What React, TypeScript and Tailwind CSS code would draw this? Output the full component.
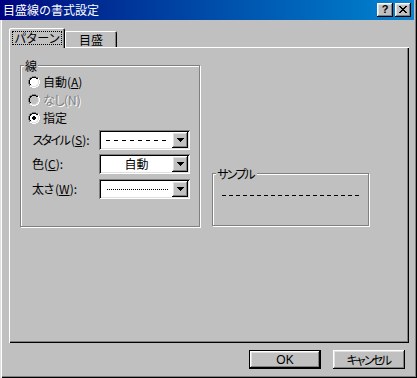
import React from "react";

const raised =
  "shadow-[inset_-1px_-1px_#000,inset_1px_1px_#fff,inset_-2px_-2px_#808080,inset_2px_2px_#dfdfdf]";
const sunken =
  "shadow-[inset_1px_1px_#808080,inset_-1px_-1px_#fff,inset_2px_2px_#000,inset_-2px_-2px_#dfdfdf]";

function Radio({ checked, disabled }: { checked?: boolean; disabled?: boolean }) {
  return (
    <svg width="12" height="12" viewBox="0 0 12 12" shapeRendering="crispEdges">
      <path d="M4 0h4v1H4zM2 1h2v1H2zM8 1h2v1H8zM1 2h1v2H1zM0 4h1v4H0zM1 8h1v2H1z" fill="#808080" />
      <path d="M4 1h4v1H4zM2 2h2v1H2zM8 2h2v1H8zM2 3h1v1H2zM1 4h1v4H1zM2 8h1v1H2z" fill="#000" />
      <path d="M10 2h1v2h-1zM11 4h1v4h-1zM10 8h1v2h-1zM8 10h2v1H8zM2 10h2v1H2zM4 11h4v1H4z" fill="#fff" />
      <path d="M9 3h1v1H9zM10 4h1v4h-1zM9 8h1v1H9zM8 9h2v1H8zM2 9h2v1H2zM4 10h4v1H4z" fill="#dfdfdf" />
      <path d="M4 2h4v1h1v1h1v4H9v1H8v1H4V9H3V8H2V4h1V3h1z" fill={disabled ? "#c0c0c0" : "#fff"} />
      {checked && <path d="M5 4h2v1h1v2H7v1H5V7H4V5h1z" fill="#000" />}
    </svg>
  );
}

function DropButton() {
  return (
    <div className={`w-[16px] h-[16px] bg-[#c0c0c0] flex items-center justify-center ${raised}`}>
      <svg width="7" height="4" viewBox="0 0 7 4" shapeRendering="crispEdges">
        <path d="M0 0h7v1H6v1H5v1H4v1H3V3H2V2H1V1H0z" fill="#000" />
      </svg>
    </div>
  );
}

function Combo({ children, start }: { children: React.ReactNode; start?: boolean }) {
  return (
    <div className={`w-[91px] h-[20px] bg-white flex items-center p-[2px] ${sunken}`}>
      <div className={`flex-1 h-full flex items-center ${start ? "justify-start" : "justify-center"}`}>{children}</div>
      <DropButton />
    </div>
  );
}

export default function App() {
  return (
    <div className="w-[417px] h-[378px] bg-[#c0c0c0] overflow-hidden flex flex-col text-[12px] leading-[14px] text-black font-['Noto_Sans_CJK_JP','Liberation_Sans',sans-serif] shadow-[inset_1px_0_#dfdfdf,inset_2px_0_#fff,inset_-1px_-1px_#000,inset_-2px_-2px_#808080]">
      {/* Title bar */}
      <div className="w-[414px] h-[20px] flex items-center pl-[3px] pr-[3px] bg-gradient-to-r from-[#000080] to-[#1084d0] text-white">
        <span className="text-[12px] leading-[14px] whitespace-nowrap">目盛線の書式設定</span>
        <div className="ml-auto flex gap-[2px]">
          <div className={`w-[16px] h-[14px] bg-[#c0c0c0] flex items-center justify-center ${raised}`}>
            <span className="text-black font-bold text-[11px] leading-[11px] font-['Liberation_Sans',sans-serif] -mt-[1px]">?</span>
          </div>
          <div className={`w-[16px] h-[14px] bg-[#c0c0c0] flex items-center justify-center ${raised}`}>
            <svg width="8" height="7" viewBox="0 0 8 7" shapeRendering="crispEdges" className="-mt-[1px]">
              <path d="M0 0h2v1h1v1h2V1h1V0h2v1H7v1H6v1H5v1h1v1h1v1h1v1H6V6H5V5H3v1H2v1H0V6h1V5h1V4h1V3H2V2H1V1H0z" fill="#000" />
            </svg>
          </div>
        </div>
      </div>

      {/* Tabs */}
      <div className="mt-[8px] ml-[9px] h-[20px] flex items-end">
        <div className="relative w-[56px] h-[20px] bg-[#c0c0c0] rounded-tl-[2px] rounded-tr-[2px] shadow-[inset_1px_1px_#fff,inset_-1px_0_#000,inset_-2px_0_#808080] pt-[3px] pl-[3px]">
          <div className="w-[50px] h-[14px] border border-dotted border-black flex items-center justify-center overflow-visible">
            <span className="leading-[12px] whitespace-nowrap tracking-[-0.5px]">パターン</span>
          </div>
        </div>
        <div className="w-[52px] h-[16px] mb-[1px] bg-[#c0c0c0] rounded-tr-[2px] shadow-[inset_1px_1px_#fff,inset_-1px_0_#000,inset_-2px_0_#808080] flex items-center justify-center">
          <span className="pt-[1px] whitespace-nowrap">目盛</span>
        </div>
      </div>

      {/* Panel */}
      <div className="-mt-[1px] ml-[9px] w-[400px] h-[296px] shadow-[inset_1px_1px_#fff,inset_-1px_-1px_#000,inset_-2px_-2px_#808080] flex items-start pl-[11px] pt-[18px] gap-[12px]">
        {/* Group 線 */}
        <div className="w-[180px] h-[162px] border border-[#808080] shadow-[inset_1px_1px_#fff,1px_1px_#fff] flex flex-col">
          <div className="-mt-[7px] ml-[3px] self-start bg-[#c0c0c0] px-[1px] leading-[14px]">線</div>
          <div className="flex flex-col pl-[7px]">
            <div className="h-[18px] flex items-center gap-[3px]">
              <Radio />
              <span className="whitespace-nowrap">
                自動(<u>A</u>)
              </span>
            </div>
            <div className="h-[18px] flex items-center gap-[3px]">
              <Radio disabled />
              <span className="whitespace-nowrap text-[#808080] [text-shadow:1px_1px_0_#fff]">
                <span className="tracking-[-1.5px]">なし</span>(N)
              </span>
            </div>
            <div className="h-[18px] flex items-center gap-[3px]">
              <Radio checked />
              <span className="whitespace-nowrap">指定</span>
            </div>
          </div>
          <div className="flex flex-col pl-[11px] mt-[3px]">
            <div className="flex items-center">
              <span className="w-[67px] whitespace-nowrap">
                <span className="tracking-[-3px]">スタイル</span>
                <span className="ml-[3px]">
                  (<u>S</u>):
                </span>
              </span>
              <Combo start>
                <svg width="60" height="2" viewBox="0 0 60 2" shapeRendering="crispEdges" className="ml-[5px]">
                  <line x1="0" y1="1" x2="60" y2="1" stroke="#000" strokeWidth="1" strokeDasharray="4 4" />
                </svg>
              </Combo>
            </div>
            <div className="flex items-center mt-[4px]">
              <span className="w-[67px] whitespace-nowrap">
                色(<u>C</u>):
              </span>
              <Combo>
                <span className="whitespace-nowrap">自動</span>
              </Combo>
            </div>
            <div className="flex items-center mt-[5px]">
              <span className="w-[67px] whitespace-nowrap">
                <span className="tracking-[-1px]">太さ</span>
                <span className="ml-[1px]">
                  (<u>W</u>):
                </span>
              </span>
              <Combo start>
                <svg width="61" height="2" viewBox="0 0 61 2" shapeRendering="crispEdges" className="ml-[6px]">
                  <line x1="0" y1="1" x2="61" y2="1" stroke="#000" strokeWidth="1" strokeDasharray="1 1" />
                </svg>
              </Combo>
            </div>
          </div>
        </div>

        {/* Sample group */}
        <div className="mt-[108px] w-[157px] h-[53px] border border-[#808080] shadow-[inset_1px_1px_#fff,1px_1px_#fff] flex flex-col">
          <div className="-mt-[7px] ml-[3px] self-start bg-[#c0c0c0] pl-[1px] pr-[4px] leading-[14px] whitespace-nowrap tracking-[-3px]">
            サンプル
          </div>
          <div className="mt-[13px] ml-[9px]">
            <svg width="137" height="2" viewBox="0 0 137 2" shapeRendering="crispEdges">
              <line x1="0" y1="1" x2="137" y2="1" stroke="#000" strokeWidth="1" strokeDasharray="4 3" />
            </svg>
          </div>
        </div>
      </div>

      {/* Buttons */}
      <div className="mt-[7px] flex justify-end pr-[12px] gap-[12px]">
        <div className="w-[72px] h-[19px] border border-black">
          <div className={`w-full h-full flex items-center justify-center ${raised}`}>
            <span className="font-['Liberation_Sans',sans-serif]">OK</span>
          </div>
        </div>
        <div className={`w-[72px] h-[19px] flex items-center justify-center ${raised}`}>
          <span className="whitespace-nowrap tracking-[-3.5px] pr-[3px]">キャンセル</span>
        </div>
      </div>
    </div>
  );
}
